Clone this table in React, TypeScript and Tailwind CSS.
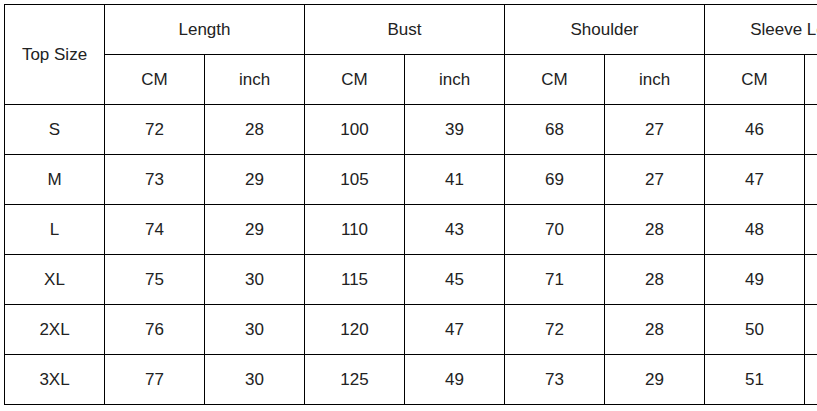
import { Fragment } from "react";

const groups = ["Length", "Bust", "Shoulder", "Sleeve Length"];

const rows: [string, ...number[]][] = [
  ["S", 72, 28, 100, 39, 68, 27, 46, 18],
  ["M", 73, 29, 105, 41, 69, 27, 47, 19],
  ["L", 74, 29, 110, 43, 70, 28, 48, 19],
  ["XL", 75, 30, 115, 45, 71, 28, 49, 19],
  ["2XL", 76, 30, 120, 47, 72, 28, 50, 20],
  ["3XL", 77, 30, 125, 49, 73, 29, 51, 20],
];

const cell = "border border-black text-center align-middle p-0";

export default function App() {
  return (
    <div className="w-screen h-screen overflow-hidden bg-white pl-[4px] pt-[4px] font-['Liberation_Sans',Arial,sans-serif] text-[17px] text-[#222]">
      <table className="border-collapse table-fixed w-[900px]">
        <colgroup>
          {Array.from({ length: 9 }).map((_, i) => (
            <col key={i} className="w-[100px]" />
          ))}
        </colgroup>
        <thead>
          <tr className="h-[50px]">
            <th rowSpan={2} className={`${cell} font-normal`}>
              Top Size
            </th>
            {groups.map((g) => (
              <th key={g} colSpan={2} className={`${cell} font-normal whitespace-nowrap`}>
                {g}
              </th>
            ))}
          </tr>
          <tr className="h-[50px]">
            {groups.map((g) => (
              <Fragment key={g}>
                <th className={`${cell} font-normal`}>CM</th>
                <th className={`${cell} font-normal`}>inch</th>
              </Fragment>
            ))}
          </tr>
        </thead>
        <tbody>
          {rows.map((r) => (
            <tr key={r[0]} className="h-[50px]">
              {r.map((v, i) => (
                <td key={i} className={cell}>
                  {v}
                </td>
              ))}
            </tr>
          ))}
        </tbody>
      </table>
    </div>
  );
}
